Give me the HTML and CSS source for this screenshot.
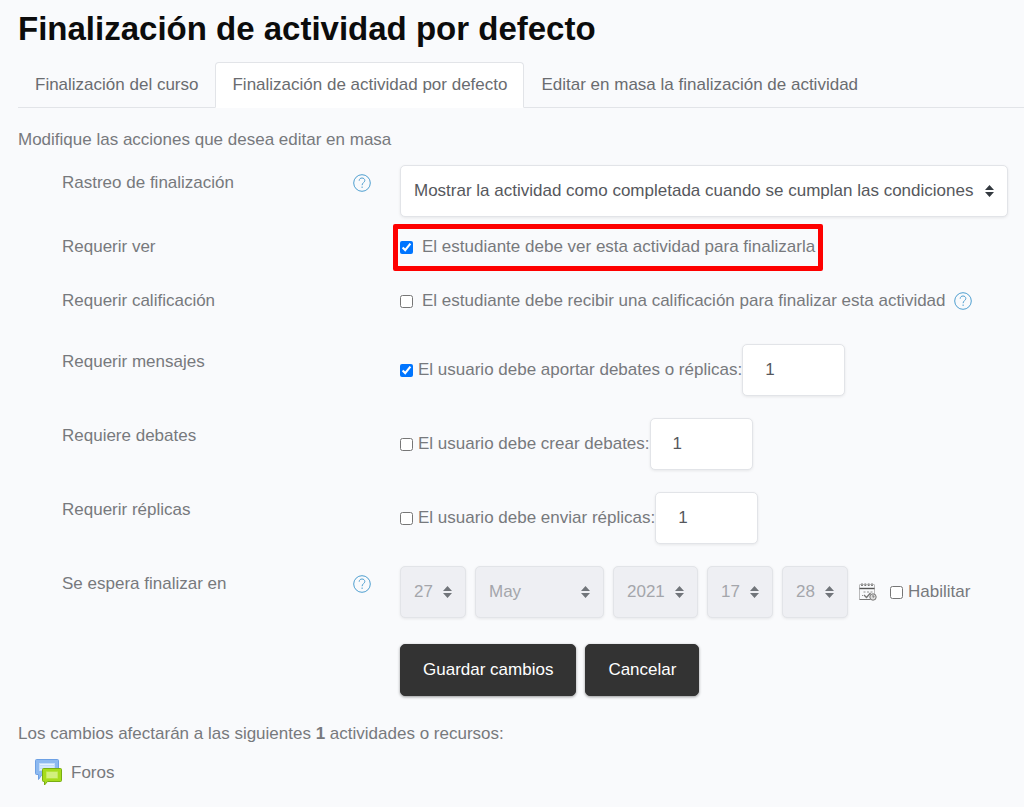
FILE: index.html
```
<!DOCTYPE html>
<html lang="es">
  <head>
    <meta charset="UTF-8" />
    <meta name="viewport" content="width=device-width, initial-scale=1.0" />
    <title>Finalización de actividad por defecto</title>
    <link rel="stylesheet" href="styles.css">
  </head>
  <body>
    <svg class="sprite" aria-hidden="true">
      <symbol id="icon-help" viewBox="0 0 18 18">
        <circle cx="9" cy="9" r="8.3" fill="none" stroke="#4f9fd0" />
        <path d="M6.2 6.700c0-1.700 1.200-2.700 2.800-2.700s2.800 1 2.800 2.500c0 2.100-2.700 2.200-2.700 4.700M9.100 12.500v1.500" fill="none" stroke="#4f9fd0" />
      </symbol>
    </svg>
    <h1>Finalización de actividad por defecto</h1>
    <nav class="tabs">
      <a class="tab" href="#">Finalización del curso</a>
      <a class="tab active" href="#">Finalización de actividad por defecto</a>
      <a class="tab" href="#">Editar en masa la finalización de actividad</a>
    </nav>
    <main>
      <p class="intro">Modifique las acciones que desea editar en masa</p>
      <form>
        <div class="row row-select">
          <div class="row-label">
            <label for="tracking">Rastreo de finalización</label>
            <button type="button" class="help" aria-label="Ayuda"><svg><use href="#icon-help" /></svg></button>
          </div>
          <div class="row-field">
            <select id="tracking" class="control">
              <option>Mostrar la actividad como completada cuando se cumplan las condiciones</option>
            </select>
          </div>
        </div>
        <div class="row">
          <div class="row-label">Requerir ver</div>
          <div class="row-field">
            <label class="check check-wide highlight"><input type="checkbox" checked /> El estudiante debe ver esta actividad para finalizarla</label>
          </div>
        </div>
        <div class="row row-grade">
          <div class="row-label">Requerir calificación</div>
          <div class="row-field">
            <label class="check check-wide"><input type="checkbox" /> El estudiante debe recibir una calificación para finalizar esta actividad</label>
            <button type="button" class="help" aria-label="Ayuda"><svg><use href="#icon-help" /></svg></button>
          </div>
        </div>
        <div class="row">
          <div class="row-label">Requerir mensajes</div>
          <div class="row-field">
            <label class="check"><input type="checkbox" checked /> El usuario debe aportar debates o réplicas:</label>
            <input type="text" class="control number" value="1" aria-label="Debates o réplicas" />
          </div>
        </div>
        <div class="row">
          <div class="row-label">Requiere debates</div>
          <div class="row-field">
            <label class="check"><input type="checkbox" /> El usuario debe crear debates:</label>
            <input type="text" class="control number" value="1" aria-label="Debates" />
          </div>
        </div>
        <div class="row">
          <div class="row-label">Requerir réplicas</div>
          <div class="row-field">
            <label class="check"><input type="checkbox" /> El usuario debe enviar réplicas:</label>
            <input type="text" class="control number" value="1" aria-label="Réplicas" />
          </div>
        </div>
        <div class="row">
          <div class="row-label">
            Se espera finalizar en
            <button type="button" class="help" aria-label="Ayuda"><svg><use href="#icon-help" /></svg></button>
          </div>
          <div class="row-field date">
            <select class="control short" aria-label="Día" disabled><option>27</option></select>
            <select class="control month" aria-label="Mes" disabled><option>May</option></select>
            <select class="control year" aria-label="Año" disabled><option>2021</option></select>
            <select class="control short" aria-label="Hora" disabled><option>17</option></select>
            <select class="control short" aria-label="Minuto" disabled><option>28</option></select>
            <svg class="calendar" viewBox="0 0 18 18" fill="none" stroke="#777">
              <path d="M3 .5v2.500M6.300 .5v2.500M9.700 .5v2.500M13 .5v2.500" stroke-width="1.8" />
              <path d="M.5 1.500h15M.5 2v14.500M15.500 2v9" stroke="#aaa" stroke-width=".8" />
              <path d="M.5 5.500h15" stroke="#555" stroke-width="1.4" />
              <path d="M.5 16.500h11" />
              <path d="M4.500 9h2M8 9h2M11.500 9h2M3 12.500h1" stroke-width=".8" />
              <path d="M5 12l2.500 2.500 4-4.500" stroke-width="1.4" />
              <circle cx="14" cy="14" r="3.200" fill="#ddd" />
              <path d="M14 12v2.300l1.400-.8" />
            </svg>
            <label class="check"><input type="checkbox" /> Habilitar</label>
          </div>
        </div>
        <div class="actions">
          <button type="submit" class="btn">Guardar cambios</button>
          <button type="button" class="btn">Cancelar</button>
        </div>
      </form>
      <p class="summary">Los cambios afectarán a las siguientes <strong>1</strong> actividades o recursos:</p>
      <div class="activity">
        <svg viewBox="0 0 28 27">
          <path d="M1.5.5h21a1 1 0 0 1 1 1v13a1 1 0 0 1-1 1H7l-3.5 5v-5h-2a1 1 0 0 1-1-1v-13a1 1 0 0 1 1-1z" fill="#8db9f0" stroke="#6da0e4" />
          <path d="M4 4h16v8H4z" fill="#c2dcfa" />
          <path d="M5 5.5h14M5 8h14M5 10.500h10" stroke="#e6f2fe" />
          <path d="M8.500 9.500h17a1 1 0 0 1 1 1v11a1 1 0 0 1-1 1H12.500l-3 3.500v-3.500h-1a1 1 0 0 1-1-1v-11a1 1 0 0 1 1-1z" fill="#a6dc1c" stroke="#78ad12" />
          <path d="M11 12.500h12v7H11z" fill="#c4ea5c" />
          <path d="M12 14h10M12 16h10M12 18h10" stroke="#e0f5a0" />
        </svg>
        <span>Foros</span>
      </div>
    </main>
  </body>
</html>
```
FILE: styles.css
```
* {
  margin: 0;
  padding: 0;
  box-sizing: border-box;
}

body {
  font-family: "Liberation Sans", Arial, sans-serif;
  font-size: 17px;
  line-height: 24px;
  color: #77797d;
  background-color: #f9fafc;
  padding: 8px 0 20px 18px;
}

button,
input,
select {
  font: inherit;
}

.sprite {
  display: none;
}

h1 {
  font-size: 33px;
  line-height: 42px;
  color: #0c0c0c;
}

.tabs {
  display: flex;
  margin-top: 12px;
  border-bottom: 1px solid #e2e4e8;
}

.tab {
  padding: 10px 16px;
  margin-bottom: -1px;
  border: 1px solid transparent;
  border-radius: 4px 4px 0 0;
  color: #6a6c70;
  text-decoration: none;
}

.tab.active {
  background-color: #fff;
  border-color: #e2e4e8;
  border-bottom-color: #fff;
}

main {
  padding: 20px 16px 0 0;
}

.row {
  display: grid;
  grid-template-columns: 309px minmax(0, 1fr);
  gap: 29px;
  margin: 0 0 22px 44px;
}

.intro {
  margin-bottom: 13px;
}

.row-select {
  margin-bottom: 12px;
}

.row-grade {
  margin-bottom: 29px;
}

.row-label {
  display: flex;
  justify-content: space-between;
  align-items: center;
  height: 24px;
  margin-top: 6px;
}

.row-field {
  display: flex;
  align-items: center;
  min-height: 32px;
}

.row-field:has(.check-wide) {
  padding-top: 4px;
}

.help {
  display: flex;
  background: none;
  border: none;
  cursor: pointer;
}

.help svg {
  width: 18px;
  height: 18px;
}

.row-field .help {
  margin-left: 8px;
}

.check {
  display: flex;
  align-items: center;
  gap: 5px;
}

.check input {
  width: 13px;
  height: 13px;
}

.check-wide {
  gap: 9px;
}

.highlight {
  position: relative;
}

.highlight::after {
  content: "";
  position: absolute;
  inset: -11px -8px -12px -7px;
  border: 5px solid #fe0000;
  border-radius: 2px;
}

.control {
  height: 52px;
  border: 1px solid #e2e4e8;
  border-radius: 5px;
  background-color: #fff;
  color: #56585d;
  box-shadow: 0 1px 3px rgba(0, 0, 0, 0.08);
}

select.control {
  width: 100%;
  padding: 0 13px;
  appearance: none;
  background-image: url("data:image/svg+xml,%3Csvg xmlns='http://www.w3.org/2000/svg' viewBox='0 0 9 12'%3E%3Cpath d='M0 5l4.500-5L9 5zM0 7h9l-4.500 5z' fill='%23343a40'/%3E%3C/svg%3E");
  background-repeat: no-repeat;
  background-position: right 13px center;
  background-size: 9px 12px;
}

select.control:disabled {
  background-color: #eeeff3;
  background-image: url("data:image/svg+xml,%3Csvg xmlns='http://www.w3.org/2000/svg' viewBox='0 0 9 12'%3E%3Cpath d='M0 5l4.500-5L9 5zM0 7h9l-4.500 5z' fill='%2371757a'/%3E%3C/svg%3E");
  color: #a4a6ab;
  opacity: 1;
}

.number {
  width: 103px;
  padding: 0 22px;
}

.date {
  gap: 9px;
}

select.short {
  width: 66px;
}

select.month {
  width: 129px;
}

select.year {
  width: 85px;
}

.calendar {
  width: 18px;
  height: 18px;
  margin: 0 4px 0 2px;
}

.actions {
  display: flex;
  gap: 9px;
  margin: 26px 0 26px 382px;
}

.btn {
  height: 52px;
  padding: 0 22px;
  border: 1px solid #333;
  border-radius: 5px;
  background-color: #333;
  color: #fff;
  box-shadow: 0 1px 3px rgba(0, 0, 0, 0.4);
  cursor: pointer;
}

.activity {
  display: flex;
  align-items: center;
  gap: 8px;
  margin: 13px 0 0 17px;
}

.activity svg {
  width: 28px;
  height: 27px;
}
```
